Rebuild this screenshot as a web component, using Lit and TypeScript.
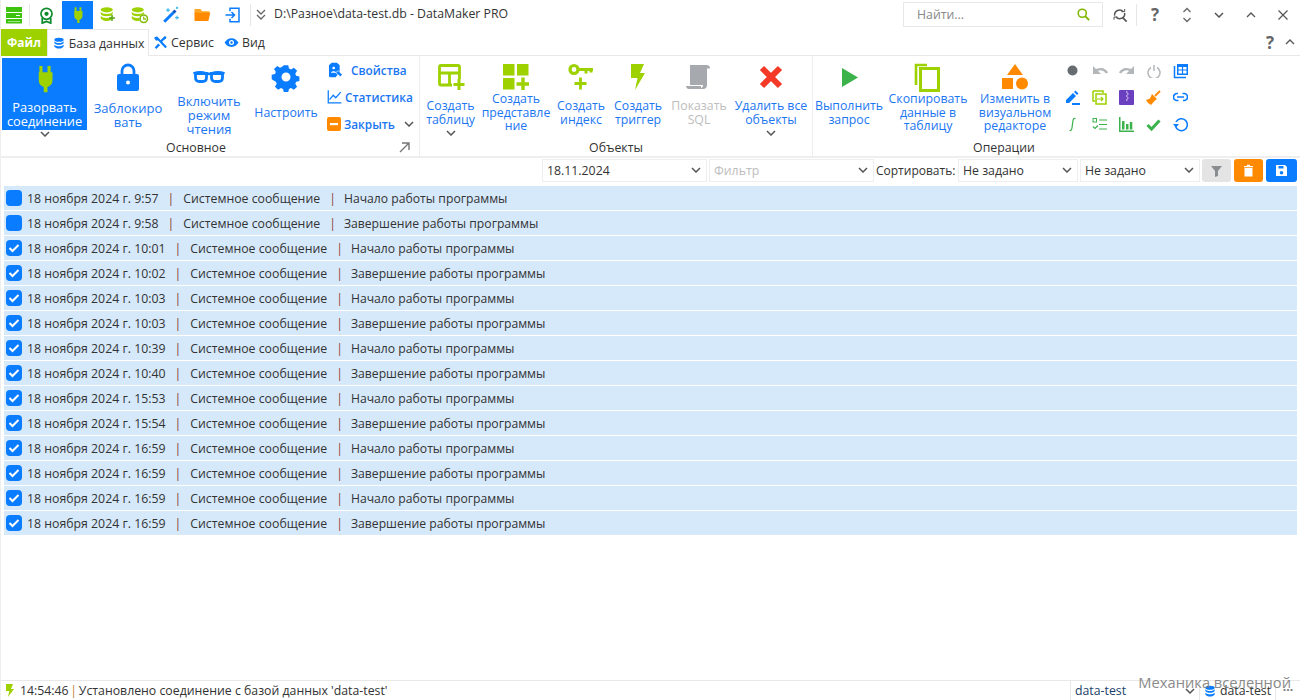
import { LitElement, html, svg, css } from "lit";
import { customElement } from "lit/decorators.js";

const BLUE = "#0a7cff";
const LIME = "#9dd100";
const ORANGE = "#ff8a00";
const GREEN = "#3cb34a";

const icon = (size: number, body: unknown, view = "0 0 24 24") =>
  html`<svg width=${size} height=${size} viewBox=${view} style="display:block;flex:none">${body}</svg>`;

const plug = (size: number, c = LIME) =>
  icon(size, svg`<path fill=${c} d="M7.5 1.5h2.5v5h4v-5h2.500v5h1.500v6.500c0 3-1.700 4.800-4 5.300v4.200h-3v-4.200c-2.300-.5-4-2.300-4-5.300V6.500h.5z"/>`);

const chevron = (c = "#555") =>
  html`<svg width="10" height="6" viewBox="0 0 10 6" style="display:block;flex:none"><path d="M1 1l4 4 4-4" fill="none" stroke=${c} stroke-width="1.500"/></svg>`;

const dbDisc = (c: string) => svg`
  <ellipse cx="9" cy="5" rx="8" ry="3.500" fill=${c}/>
  <path fill=${c} d="M1 7.500c1 2 4 3 8 3s7-1 8-3v3c-1 2-4 3-8 3s-7-1-8-3zM1 13c1 2 4 3 8 3s7-1 8-3v3c0 2-4 4-8 4s-8-2-8-4z"/>`;

const icons: Record<string, () => unknown> = {
  menu: () => icon(20, svg`<g fill="none" stroke="#3ec40e" stroke-width="2"><rect x="3" y="3" width="14" height="3" fill="#3ec40e"/><rect x="3" y="9" width="14" height="3"/><rect x="3" y="15" width="14" height="2.500"/></g><rect x="3" y="9" width="9" height="3" fill="#3ec40e"/>`, "0 0 20 20"),
  award: () => icon(17, svg`<circle cx="10" cy="8" r="6.500" fill="none" stroke="#0d8a2c" stroke-width="2"/><circle cx="10" cy="8" r="2.500" fill="#0d8a2c"/><path d="M5 13v6l5-2 5 2v-6" fill="none" stroke="#0d8a2c" stroke-width="2"/>`, "0 0 20 20"),
  dbPlus: () => icon(18, svg`${dbDisc(LIME)}<path d="M16 12v8M12 16h8" stroke="#58a818" stroke-width="2"/>`),
  dbClock: () => icon(18, svg`${dbDisc(LIME)}<circle cx="17" cy="17" r="6" fill="#fff"/><circle cx="17" cy="17" r="5" fill="none" stroke="#7fb800" stroke-width="2"/><path d="M17 14v3.500h3" fill="none" stroke="#7fb800" stroke-width="1.500"/>`),
  wand: () => icon(18, svg`<path d="M3 21L15 9" stroke=${BLUE} stroke-width="4"/><path d="M15 9l3-3" stroke="#0a56c0" stroke-width="4"/><path d="M8 3v5M5.500 5.500h5M20 13v5M17.500 15.500h5M20 1v3M18.500 2.500h3" stroke="#34b7f1" stroke-width="1.500"/>`),
  folder: () => icon(18, svg`<path fill="#ffa726" d="M2 4h8l2 3h10v3H2z"/><path fill=${ORANGE} d="M2 9h21l-2.500 11H2z"/>`),
  login: () => icon(18, svg`<path d="M8 7V3h12v18H8v-4" fill="none" stroke=${BLUE} stroke-width="2"/><path d="M2 12h11M10 8l4 4-4 4" fill="none" stroke=${BLUE} stroke-width="2"/>`),
  doubleDown: () => html`<svg width="10" height="11" viewBox="0 0 10 11" style="display:block"><path d="M1 1l4 4 4-4M1 6l4 4 4-4" fill="none" stroke="#666" stroke-width="1.300"/></svg>`,
  search: () => icon(15, svg`<circle cx="10" cy="10" r="6.500" fill="none" stroke="#7fb800" stroke-width="2.500"/><path d="M15 15l6 6" stroke="#7fb800" stroke-width="3"/>`),
  searchRefresh: () => icon(16, svg`<path d="M4 13a7.500 7.500 0 0 1 13-6M19 9a7.500 7.500 0 0 1-13 6" fill="none" stroke="#555" stroke-width="2.200"/><path d="M14 7h5V3M8 15H3v4" fill="none" stroke="#555" stroke-width="1.500"/><path d="M16 16l6 6" stroke="#555" stroke-width="2.500"/>`),
  updown: () => html`<svg width="10" height="16" viewBox="0 0 10 16" style="display:block"><path d="M1.500 5l3.500-3.500L8.500 5M1.500 11l3.500 3.500 3.500-3.500" fill="none" stroke="#666" stroke-width="1.300"/></svg>`,
  up: () => html`<svg width="10" height="6" viewBox="0 0 10 6" style="display:block"><path d="M1 5l4-4 4 4" fill="none" stroke="#555" stroke-width="1.300"/></svg>`,
  close: () => html`<svg width="10" height="10" viewBox="0 0 10 10" style="display:block"><path d="M.5.500l9 9M9.500.500l-9 9" stroke="#555" stroke-width="1.200"/></svg>`,
  tabDb: () => icon(14, svg`<g transform="translate(3 1.500)">${dbDisc(BLUE)}</g>`),
  tools: () => icon(15, svg`<path d="M5 3l16 17M20 3l-7 7M10 15l-6 6" stroke=${BLUE} stroke-width="3.500" fill="none"/><path d="M3 3l5 1 1 4-4 1-3-4zM21 2c1 3-1 5-3 5l-1-3z" fill=${BLUE}/>`),
  eye: () => icon(15, svg`<path fill=${BLUE} fill-rule="evenodd" d="M12 5c5 0 9 3 11 7-2 4-6 7-11 7S3 16 1 12c2-4 6-7 11-7zm0 3a4 4 0 1 0 0 8 4 4 0 0 0 0-8zm0 2a2 2 0 1 1 0 4 2 2 0 0 1 0-4z"/>`),
  lock: () => icon(30, svg`<path d="M9 13V9a6 6 0 0 1 12 0v4" fill="none" stroke=${BLUE} stroke-width="2.800"/><path fill=${BLUE} fill-rule="evenodd" d="M6 12h18a2 2 0 0 1 2 2v13a2 2 0 0 1-2 2H6a2 2 0 0 1-2-2V14a2 2 0 0 1 2-2zm9 6.500a2 2 0 1 0 0 4 2 2 0 0 0 0-4z"/>`, "0 0 30 30"),
  glasses: () => icon(34, svg`<path d="M1.500 13.500c4-1.500 9-1.500 13 0 1.500.5 3.500.5 5 0 4-1.500 9-1.500 13 0" fill="none" stroke=${BLUE} stroke-width="2.600"/><path d="M3.500 13.500h11v4c0 2.500-1.500 4-4 4h-3c-2.500 0-4-1.500-4-4zM19.500 13.500h11v4c0 2.500-1.500 4-4 4h-3c-2.500 0-4-1.500-4-4z" fill="none" stroke=${BLUE} stroke-width="2.800"/>`, "0 0 34 34"),
  gear: () => icon(30, svg`<path fill=${BLUE} fill-rule="evenodd" d="M12.500 2h5l.8 3.600 2.300 1 3.200-2 3.500 3.500-2 3.200 1 2.300 3.600.8v5l-3.600.8-1 2.300 2 3.200-3.500 3.500-3.200-2-2.300 1-.8 3.600h-5l-.8-3.600-2.300-1-3.200 2-3.500-3.500 2-3.200-1-2.300L-.9 17.500v-5l3.600-.8 1-2.300-2-3.200 3.500-3.500 3.200 2 2.300-1zM15 10a5 5 0 1 0 0 10 5 5 0 0 0 0-10z" transform="translate(1.500 1.500) scale(.9)"/>`, "0 0 30 30"),
  props: () => icon(16, svg`<path fill=${BLUE} d="M7 1h8l4 4v10l-6 8H5a2 2 0 0 1-2-2V5z"/><circle cx="10" cy="9" r="2" fill="#fff"/><path d="M6 16c.5-3 7-3 8 0z" fill="#fff"/><path d="M13 16l4-3 6 6-3 3z" fill=${BLUE} stroke="#fff"/>`),
  chart: () => icon(15, svg`<path d="M2 2v20h21" fill="none" stroke=${BLUE} stroke-width="2"/><path d="M4 17l6-7 4 4 8-9" fill="none" stroke=${BLUE} stroke-width="2"/>`),
  closeBox: () => icon(14, svg`<rect width="14" height="14" rx="2" fill=${ORANGE}/><rect x="3" y="6" width="8" height="2.200" fill="#fff"/>`, "0 0 14 14"),
  dialogLauncher: () => html`<svg width="11" height="11" viewBox="0 0 11 11" style="display:block"><path d="M1 10l8.500-8.500M3 1h7v7" fill="none" stroke="#777" stroke-width="1.400"/></svg>`,
  createTable: () => icon(30, svg`<path d="M3.500 5a1.500 1.500 0 0 1 1.500-1.500h17a1.500 1.500 0 0 1 1.500 1.500v12M16 23H5a1.500 1.500 0 0 1-1.500-1.500V5" fill="none" stroke=${LIME} stroke-width="2.800"/><path d="M4 11h19M13.500 11v12" stroke=${LIME} stroke-width="2.800"/><path d="M23 17v11M17.500 22.500h11" stroke=${LIME} stroke-width="3"/>`, "0 0 30 30"),
  createView: () => icon(28, svg`<g fill=${LIME}><rect x="1" y="1" width="11.500" height="11.500"/><rect x="15" y="1" width="11.500" height="11.500"/><rect x="1" y="15" width="11.500" height="11.500"/></g><path d="M21 14.500v12.500M14.500 21h12.500" stroke=${LIME} stroke-width="3.400"/>`, "0 0 28 28"),
  key: () => icon(28, svg`<circle cx="7" cy="6.500" r="4" fill="none" stroke=${LIME} stroke-width="3.200"/><path d="M11 6.500h15M19 6.500v4M24 6.500v3" fill="none" stroke=${LIME} stroke-width="3"/><path d="M13.500 14.500v12M7.500 20.500h12" stroke=${LIME} stroke-width="2.800"/>`, "0 0 28 28"),
  bolt: () => icon(28, svg`<path fill=${LIME} d="M7 1h13l-4 9h5l-10 17 2.500-12H7z"/>`, "0 0 28 28"),
  scroll: () => icon(28, svg`<path fill="#a6a9ad" d="M5 2h16c3 0 4 1.500 4 3.500h-3V22c0 2.500-1.500 4-4 4H4c-2 0-3-1.500-3-3h15v2c1.500-.5 2-1.500 2-3H5z"/><path fill="#a6a9ad" d="M6 3h15v19H6z"/>`, "0 0 28 28"),
  cross: () => icon(26, svg`<path d="M4 4l18 18M22 4L4 22" stroke="#f43a26" stroke-width="6"/>`, "0 0 26 26"),
  play: () => icon(26, svg`<path fill=${GREEN} d="M6 4l16 9.500L6 23z"/>`, "0 0 26 26"),
  copy: () => icon(30, svg`<path d="M14 3H3v20" fill="none" stroke=${LIME} stroke-width="2.600"/><rect x="7.500" y="6.500" width="18" height="22" fill="none" stroke=${LIME} stroke-width="3"/>`, "0 0 30 30"),
  shapes: () => icon(28, svg`<g fill=${ORANGE}><path d="M14 1l8 11H6z"/><rect x="1" y="15" width="11" height="11"/><circle cx="21" cy="20.500" r="6"/></g>`, "0 0 28 28"),
  dot: () => icon(13, svg`<circle cx="6.500" cy="6.500" r="5" fill="#666c70"/>`, "0 0 13 13"),
  undo: () => icon(16, svg`<path d="M2 9c4-4 10-4 13 1" fill="none" stroke="#b4b7ba" stroke-width="2.400"/><path fill="#b4b7ba" d="M1 3v8h8z"/>`, "0 0 16 16"),
  redo: () => icon(16, svg`<path d="M14 9c-4-4-10-4-13 1" fill="none" stroke="#b4b7ba" stroke-width="2.400"/><path fill="#b4b7ba" d="M15 3v8H7z"/>`, "0 0 16 16"),
  power: () => icon(14, svg`<path d="M4 3.500a6 6 0 1 0 6 0M7 1v6" fill="none" stroke="#b4b7ba" stroke-width="1.500"/>`, "0 0 14 14"),
  tableStack: () => icon(16, svg`<path d="M1.500 3v11.500H13" fill="none" stroke=${BLUE} stroke-width="1.500"/><path fill=${BLUE} fill-rule="evenodd" d="M4 1h11v11H4zm1.500 3v2.500h3.400V4zm4.600 0v2.500h3.400V4zM5.500 7.500V10.500h3.400v-3zm4.600 0v3h3.400v-3z"/>`, "0 0 16 16"),
  pen: () => icon(15, svg`<path fill=${BLUE} d="M1 10l7-7 3 3-7 7H1zM9 2l1.500-1.500 3 3L12 5zM7 13h8v2H7z"/>`, "0 0 15 15"),
  copyTo: () => icon(15, svg`<path d="M1 1h10v2M1 1v10h2" fill="none" stroke=${LIME} stroke-width="1.500"/><rect x="4" y="4" width="10" height="10" fill="none" stroke=${LIME} stroke-width="1.500"/><path d="M5 9h6M9 7l2 2-2 2" fill="none" stroke=${LIME} stroke-width="1.200"/>`, "0 0 15 15"),
  zip: () => icon(15, svg`<rect width="15" height="15" rx="1" fill="#6a3fc0"/><path d="M7 2h1.500M8 4h1.500M7 6h1.500M8 8h1.500M7 10h1.500" stroke="#fff" stroke-width="1"/>`, "0 0 15 15"),
  broom: () => icon(15, svg`<path d="M9 6l5-5" stroke=${ORANGE} stroke-width="1.800"/><path fill=${ORANGE} d="M6 4l5 5-2 1.500L5 15c-2-1-4-3-5-5l4-1.500z"/>`, "0 0 15 15"),
  link: () => icon(15, svg`<path d="M5 3.500H4a3.500 3.500 0 0 0 0 7h1.500M9.500 3.500H11a3.500 3.500 0 0 1 0 7h-1M4 7h7" fill="none" stroke=${BLUE} stroke-width="1.700"/>`, "0 0 15 15"),
  integral: () => icon(15, svg`<path d="M10.500 1.500C8 1 8 3 7.500 7S7 14 4.500 13.500" fill="none" stroke=${GREEN} stroke-width="1.200"/>`, "0 0 15 15"),
  checklist: () => icon(15, svg`<rect x="1" y="1.500" width="3.500" height="3.500" fill="none" stroke=${GREEN}/><path d="M7 3h8M7 7.500h8M7 12h8" stroke=${GREEN} stroke-width="1.200"/><path d="M1 9.500l2 2 3-3" fill="none" stroke=${GREEN} stroke-width="1.200"/>`, "0 0 15 15"),
  bars: () => icon(15, svg`<path fill=${GREEN} d="M0 0h1.500v13.500H15V15H0zM3 4h2.500v8.500H3zM7 7h2.500v5.500H7zM10.800 5h2.500v7.500h-2.500z"/>`, "0 0 15 15"),
  check: () => icon(15, svg`<path d="M1.500 8l4 4 8-8.500" fill="none" stroke=${GREEN} stroke-width="3"/>`, "0 0 15 15"),
  reload: () => icon(15, svg`<path d="M3 5a6 6 0 1 1-.5 4" fill="none" stroke=${BLUE} stroke-width="1.500"/><path fill=${BLUE} d="M0 7h6l-3 3.500z"/>`, "0 0 15 15"),
  funnel: () => icon(13, svg`<path fill="#8a8d90" d="M1 2h11L8 7v5l-3 1V7z"/>`, "0 0 13 13"),
  trash: () => icon(13, svg`<path fill="#fff" d="M2.500 4h8v8.500h-8zM2 2h9v1.300H2zM5 .8h3V2H5z"/>`, "0 0 13 13"),
  save: () => icon(13, svg`<path fill="#fff" fill-rule="evenodd" d="M1 1h9l2 2v9H1zm2.500 1v2.500h5V2zM6.500 7a1.800 1.800 0 1 0 0 3.600 1.800 1.800 0 0 0 0-3.600z"/>`, "0 0 13 13"),
  statusBolt: () => icon(13, svg`<path fill=${LIME} d="M3 0h7L8 5h3l-6 8 1.300-6H3z"/>`, "0 0 13 13"),
  check16: () => html`<svg width="16" height="16" viewBox="0 0 16 16" style="display:block"><path d="M3.500 8l3 3 6-6" fill="none" stroke="#fff" stroke-width="2"/></svg>`,
};

const topIcons = ["award", "plug", "dbPlus", "dbClock", "wand", "folder", "login"];

const bigButtonsMain = [
  { w: 82, ic: "lock", label: ["Заблокиро", "вать"], low: true },
  { w: 80, ic: "glasses", label: ["Включить", "режим", "чтения"], low: true },
  { w: 74, ic: "gear", label: ["Настроить"] },
];
const bigButtonsObj = [
  { w: 61, ic: "createTable", label: ["Создать", "таблицу"], more: true },
  { w: 70, ic: "createView", label: ["Создать", "представле", "ние"] },
  { w: 60, ic: "key", label: ["Создать", "индекс"] },
  { w: 54, ic: "bolt", label: ["Создать", "триггер"] },
  { w: 68, ic: "scroll", label: ["Показать", "SQL"], off: true },
  { w: 76, ic: "cross", label: ["Удалить все", "объекты"], more: true },
];
const bigButtonsOps = [
  { w: 72, ic: "play", label: ["Выполнить", "запрос"] },
  { w: 86, ic: "copy", label: ["Скопировать", "данные в", "таблицу"] },
  { w: 88, ic: "shapes", label: ["Изменить в", "визуальном", "редакторе"] },
];
const opsGrid = [
  "dot", "undo", "redo", "power", "tableStack",
  "pen", "copyTo", "zip", "broom", "link",
  "integral", "checklist", "bars", "check", "reload",
];

const START = "Начало работы программы";
const END = "Завершение работы программы";
const rows = [
  ["9:57", START, false], ["9:58", END, false],
  ["10:01", START, true], ["10:02", END, true],
  ["10:03", START, true], ["10:03", END, true],
  ["10:39", START, true], ["10:40", END, true],
  ["15:53", START, true], ["15:54", END, true],
  ["16:59", START, true], ["16:59", END, true],
  ["16:59", START, true], ["16:59", END, true],
] as [string, string, boolean][];

@customElement("app-root")
export class AppRoot extends LitElement {
  static styles = css`
    :host {
      display: flex;
      flex-direction: column;
      position: relative;
      height: 700px;
      overflow: hidden;
      background: #fff;
      font-family: "Open Sans", "Liberation Sans", sans-serif;
      font-size: 12.3px;
      color: #333;
      box-sizing: border-box;
      border-left: 1px solid #eee;
    }
    .titlebar { display: flex; align-items: center; height: 29px; flex: none; }
    .tb-menu { width: 28px; display: flex; justify-content: center; padding-right: 2px; box-sizing: border-box; }
    .vsep { width: 1px; height: 22px; background: #e6e6e6; flex: none; }
    .quick { display: flex; height: 28px; margin: 1px 2px 0 1px; }
    .quick-btn { width: 31px; height: 28px; display: flex; align-items: center; justify-content: center; }
    .quick-btn.on { background: #0a7cff; }
    .quick-more { width: auto; padding: 0 8px 0 5px; }
    .title { color: #333; flex: 1; white-space: nowrap; padding-bottom: 2px; }
    .search {
      width: 174px; height: 23px; border: 1px solid #e8e8e8; display: flex; align-items: center;
      justify-content: space-between; padding: 0 11px 0 13px; color: #888;
    }
    .win { display: flex; align-items: center; height: 28px; padding-right: 1px; }
    .win-btn { width: 32px; display: flex; justify-content: center; align-items: center; }
    .win-btn.refresh { width: 33px; }
    .win-btn.qmark { margin-left: 2px; }
    .help { font-size: 17px; font-weight: 700; color: #666; line-height: 1; }

    .tabs { display: flex; align-items: stretch; height: 27px; flex: none; border-bottom: 1px solid #e8e8e8; box-sizing: border-box; }
    .tab-file {
      width: 46px; background: #9dd100; color: #fff; font-weight: 700; display: flex; align-items: center; justify-content: center;
      margin-bottom: -1px; font-size: 12px;
    }
    .tab { display: flex; align-items: center; gap: 3px; padding: 0 4px; }
    .tab.view { margin-left: 2px; }
    .tab.active {
      background: #fff; border: 1px solid #e8e8e8; border-bottom: none; margin-bottom: -1px; padding: 0 3px; gap: 3px; width: 94px; justify-content: center;
    }
    .tabs-end { margin-left: auto; display: flex; align-items: center; gap: 11px; padding-right: 5px; }

    .ribbon { display: flex; height: 102px; flex: none; border-bottom: 2px solid #eee; box-sizing: border-box; }
    .group { display: flex; flex-direction: column; border-right: 1px solid #eee; flex: none; position: relative; }
    .g1 { width: 418px; }
    .g2 { width: 392px; }
    .g3 { flex: 1; border-right: none; }
    .g-body { display: flex; height: 83px; padding-top: 2px; box-sizing: border-box; }
    .g-title { height: 17px; text-align: center; line-height: 18px; color: #333; }
    .g1 .g-title { padding-right: 28px; }
    .g3 .g-title { width: 382px; }

    .big { display: flex; flex-direction: column; align-items: center; flex: none; color: #1b76f2; text-align: center; }
    .big.off { color: #bdbdbd; }
    .big-icon { height: 31px; display: flex; align-items: center; justify-content: center; margin-top: 3px; flex: none; }
    .big-label { height: 41px; display: flex; flex-direction: column; justify-content: center; line-height: 13.8px; white-space: nowrap; flex: none; }
    .big.low .big-label { padding-top: 7px; box-sizing: border-box; font-size: 13px; }
    .big-more { height: 8px; flex: none; margin-top: -3px; }

    .connect { width: 85px; margin-left: 1px; display: flex; flex-direction: column; align-items: center; flex: none; }
    .connect-main { width: 85px; height: 72px; background: #0a7cff; color: #fff; text-align: center; display: flex; flex-direction: column; align-items: center; flex: none; }
    .connect-icon { height: 42px; display: flex; align-items: center; justify-content: center; flex: none; }
    .connect-label { line-height: 14px; font-size: 12.8px; white-space: nowrap; }
    .connect-more { margin-top: 1px; }

    .small-col { width: 95px; display: flex; flex-direction: column; flex: none; margin-top: -2px; }
    .small { height: 27px; display: flex; align-items: center; color: #1b76f2; font-weight: 600; font-size: 11.8px; padding-left: 4px; gap: 3px; white-space: nowrap; box-sizing: border-box; }
    .small.wide { gap: 8px; }
    .small .end { margin-left: auto; margin-right: 4px; }
    .launcher { position: absolute; right: 9px; bottom: 3px; }

    .ops-grid { display: grid; grid-template-columns: repeat(5, 27px); grid-auto-rows: 27px; flex: none; margin-top: -1px; }
    .ops-grid > div { display: flex; align-items: center; justify-content: center; }

    .filters { display: flex; align-items: center; height: 26px; flex: none; padding: 0 0 2px 541px; box-sizing: border-box; }
    .sel {
      height: 23px; border: 1px solid #eee; box-sizing: border-box; display: flex; align-items: center;
      justify-content: space-between; padding: 0 5px 0 4px; flex: none; white-space: nowrap; margin-right: 2px;
    }
    .sel.w1 { width: 165px; }
    .sel.w2 { width: 120px; }
    .sel.off { color: #bdbdbd; }
    .sort-label { margin-right: 2px; white-space: nowrap; font-size: 12px; width: 80px; flex: none; }
    .fbtn { width: 29px; height: 23px; border-radius: 3px; display: flex; align-items: center; justify-content: center; margin-left: 3px; flex: none; }
    .fbtn.gray { background: #e4e4e4; margin-left: 0; }
    .fbtn.orange { background: #ff8a00; }
    .fbtn.blue { background: #0a7cff; width: 31px; }

    .list { flex: 1; min-height: 0; padding: 2px 3px 0 3px; display: flex; flex-direction: column; gap: 1px; }
    .row { height: 24px; background: #d6e9fb; display: flex; align-items: center; padding-left: 2px; flex: none; white-space: nowrap; color: #333; }
    .box { width: 16px; height: 16px; border-radius: 4px; background: #0a7cff; margin-right: 5px; flex: none; }
    .bar { color: #8a3d2c; padding: 0 9px; }
    .msg { font-size: 12.2px; margin-left: -1px; }

    .status { display: flex; align-items: stretch; height: 20px; flex: none; border-top: 1px solid #e8e8e8; box-sizing: border-box; }
    .status-msg { flex: 1; display: flex; align-items: center; padding-left: 2px; white-space: nowrap; }
    .status-msg .t { margin-left: 4px; }
    .status-msg .pipe { color: #c77a2c; margin: 0 -1.500px; }
    .st-sel { width: 129px; border-left: 1px solid #e8e8e8; display: flex; align-items: center; justify-content: space-between; padding: 0 4px; box-sizing: border-box; color: #1a3f6b; }
    .st-db { width: 76px; border-left: 1px solid #e8e8e8; display: flex; align-items: center; gap: 3px; padding-left: 3px; box-sizing: border-box; }
    .st-more { width: 25px; border-left: 1px solid #e8e8e8; display: flex; align-items: center; justify-content: center; font-weight: 700; color: #777; line-height: 1; box-sizing: border-box; }

    .watermark { position: absolute; right: 9px; top: 672px; font-size: 14.7px; color: #777; opacity: .85; white-space: nowrap; pointer-events: none; }
  `;

  private big(b: any) {
    return html`<div class="big ${b.off ? "off" : ""} ${b.low ? "low" : ""}" style="width:${b.w}px">
      <div class="big-icon">${icons[b.ic]()}</div>
      <div class="big-label">${b.label.map((l: string) => html`<span>${l}</span>`)}</div>
      ${b.more ? html`<div class="big-more">${chevron()}</div>` : null}
    </div>`;
  }

  render() {
    return html`
      <div class="titlebar">
        <div class="tb-menu">${icons.menu()}</div>
        <div class="vsep"></div>
        <div class="quick">
          ${topIcons.map((k) =>
            k === "plug"
              ? html`<div class="quick-btn on">${plug(18)}</div>`
              : html`<div class="quick-btn">${icons[k]()}</div>`
          )}
        </div>
        <div class="vsep"></div>
        <div class="quick-btn quick-more">${icons.doubleDown()}</div>
        <div class="title">D:\\Разное\\data-test.db - DataMaker PRO</div>
        <div class="search"><span>Найти...</span>${icons.search()}</div>
        <div class="win">
          <div class="win-btn refresh">${icons.searchRefresh()}</div>
          <div class="vsep"></div>
          <div class="win-btn qmark"><span class="help">?</span></div>
          <div class="win-btn">${icons.updown()}</div>
          <div class="win-btn">${chevron()}</div>
          <div class="win-btn">${icons.up()}</div>
          <div class="win-btn">${icons.close()}</div>
        </div>
      </div>

      <div class="tabs">
        <div class="tab-file">Файл</div>
        <div class="tab active">${icons.tabDb()}<span>База данных</span></div>
        <div class="tab">${icons.tools()}<span>Сервис</span></div>
        <div class="tab view">${icons.eye()}<span>Вид</span></div>
        <div class="tabs-end"><span class="help">?</span>${icons.up()}</div>
      </div>

      <div class="ribbon">
        <div class="group g1">
          <div class="g-body">
            <div class="connect">
              <div class="connect-main">
                <div class="connect-icon">${plug(30)}</div>
                <div class="connect-label">Разорвать<br />соединение</div>
              </div>
              <div class="connect-more">${chevron()}</div>
            </div>
            ${bigButtonsMain.map((b) => this.big(b))}
            <div class="small-col">
              <div class="small wide">${icons.props()}<span>Свойства</span></div>
              <div class="small">${icons.chart()}<span>Статистика</span></div>
              <div class="small">${icons.closeBox()}<span>Закрыть</span><span class="end">${chevron()}</span></div>
            </div>
          </div>
          <div class="g-title">Основное</div>
          <div class="launcher">${icons.dialogLauncher()}</div>
        </div>
        <div class="group g2">
          <div class="g-body">${bigButtonsObj.map((b) => this.big(b))}</div>
          <div class="g-title">Объекты</div>
        </div>
        <div class="group g3">
          <div class="g-body">
            ${bigButtonsOps.map((b) => this.big(b))}
            <div class="ops-grid">${opsGrid.map((k) => html`<div>${icons[k]()}</div>`)}</div>
          </div>
          <div class="g-title">Операции</div>
        </div>
      </div>

      <div class="filters">
        <div class="sel w1"><span>18.11.2024</span>${chevron()}</div>
        <div class="sel w1 off"><span>Фильтр</span>${chevron()}</div>
        <span class="sort-label">Сортировать:</span>
        <div class="sel w2"><span>Не задано</span>${chevron()}</div>
        <div class="sel w2"><span>Не задано</span>${chevron()}</div>
        <div class="fbtn gray">${icons.funnel()}</div>
        <div class="fbtn orange">${icons.trash()}</div>
        <div class="fbtn blue">${icons.save()}</div>
      </div>

      <div class="list">
        ${rows.map(
          ([time, msg, checked]) => html`<div class="row">
            <div class="box">${checked ? icons.check16() : null}</div>
            <span>18 ноября 2024 г. ${time}</span>
            <span class="bar">|</span>
            <span>Системное сообщение</span>
            <span class="bar">|</span>
            <span class="msg">${msg}</span>
          </div>`
        )}
      </div>

      <div class="status">
        <div class="status-msg">
          ${icons.statusBolt()}
          <span class="t">14:54:46 <span class="pipe">|</span> Установлено соединение с базой данных 'data-test'</span>
        </div>
        <div class="st-sel"><span>data-test</span>${chevron()}</div>
        <div class="st-db">${icons.tabDb()}<span>data-test</span></div>
        <div class="st-more">···</div>
      </div>
      <div class="watermark">Механика вселенной</div>
    `;
  }
}
